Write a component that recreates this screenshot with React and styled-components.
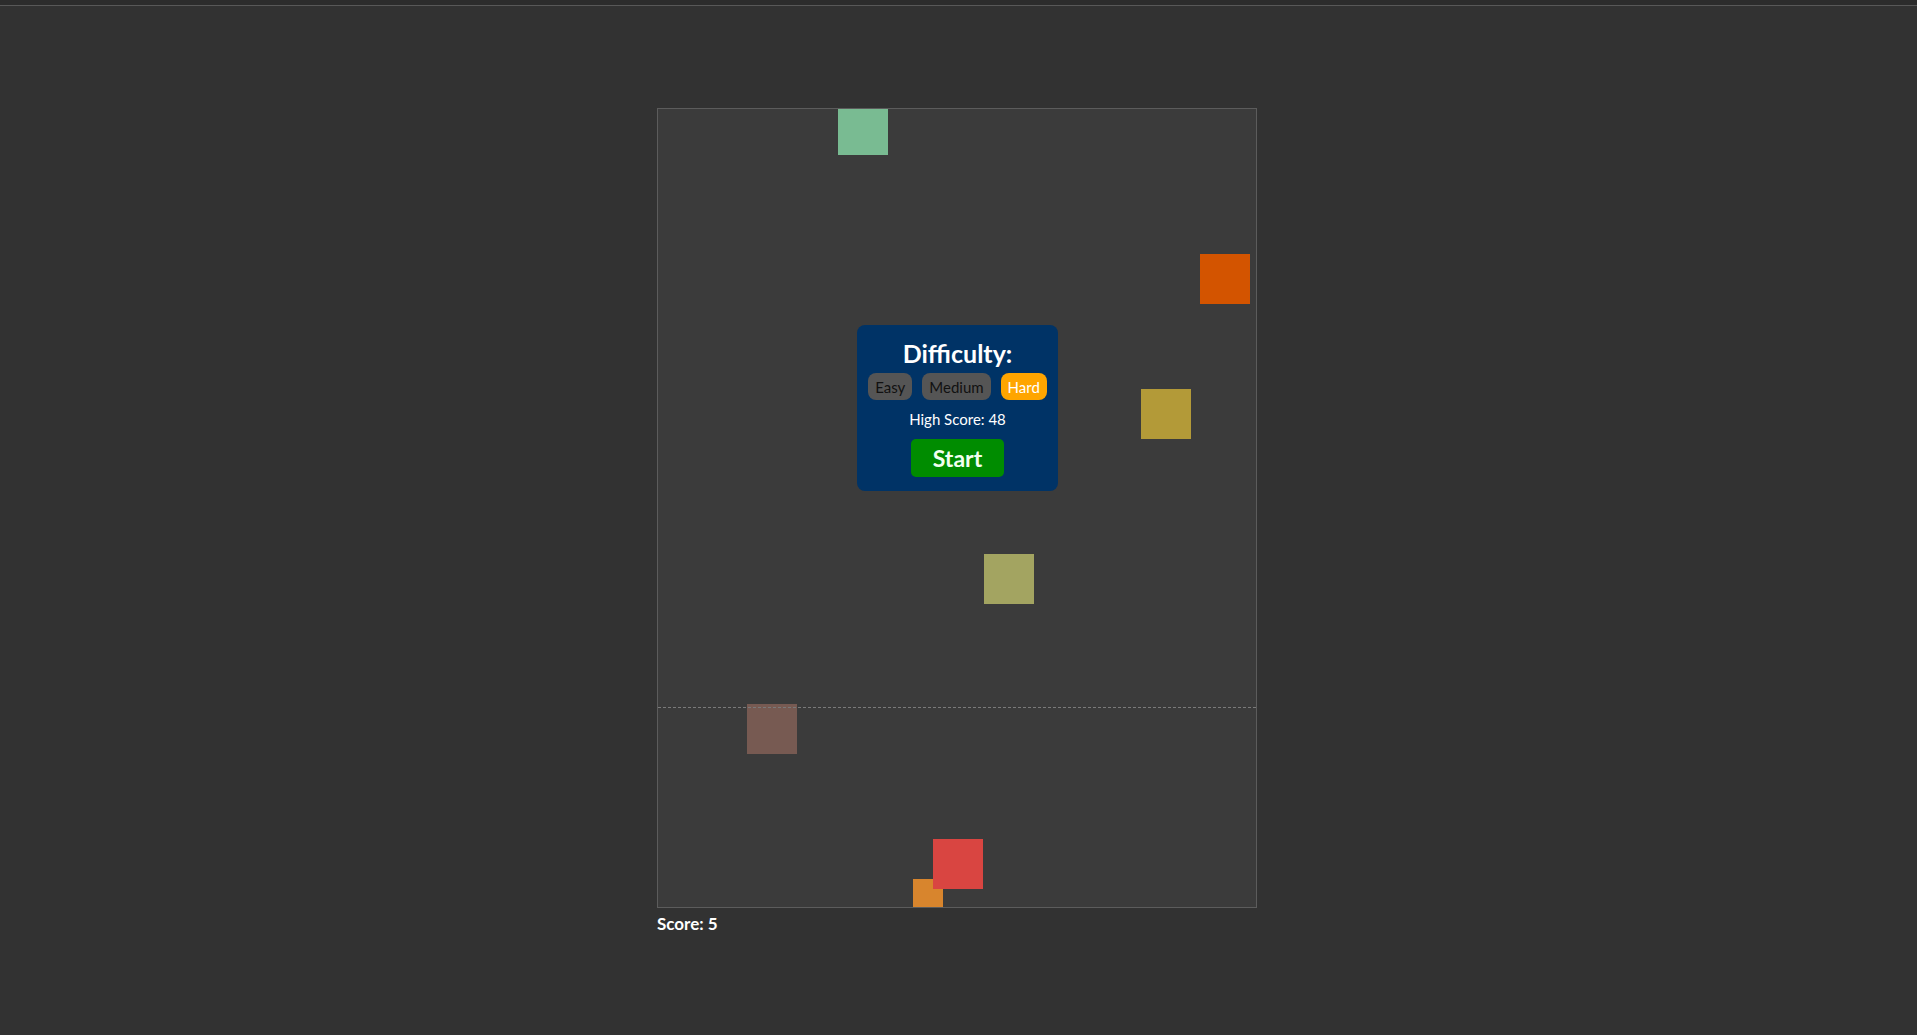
import React, { useState } from 'react';
import styled, { createGlobalStyle } from 'styled-components';

const GlobalStyle = createGlobalStyle`
  html, body {
    margin: 0;
    padding: 0;
    background: #323232;
    font-family: Lato, "Open Sans", sans-serif;
  }
`;

const TopBar = styled.div`
  height: 5px;
  background: #2c2c2c;
  border-bottom: 1px solid #585858;
`;

const Page = styled.div`
  display: flex;
  justify-content: center;
  padding-top: 102px;
  padding-right: 3px;
`;

const Column = styled.div`
  display: flex;
  flex-direction: column;
  width: 600px;
`;

const Board = styled.div`
  position: relative;
  box-sizing: border-box;
  width: 600px;
  height: 800px;
  background: #3b3b3b;
  border: 1px solid #5c5c5c;
  overflow: hidden;
`;

const DropLine = styled.div`
  position: absolute;
  left: 0;
  right: 0;
  top: 598px;
  border-top: 1px dashed #7a7a7a;
`;

const Block = styled.div`
  position: absolute;
  width: ${({ size }) => size}px;
  height: ${({ size }) => size}px;
  background: ${({ color }) => color};
`;

const Modal = styled.div`
  position: absolute;
  left: 199px;
  top: 216px;
  box-sizing: border-box;
  width: 201px;
  padding: 13px 10px 14px;
  background: #003366;
  border-radius: 8px;
  display: flex;
  flex-direction: column;
  align-items: center;
  color: #fff;
`;

const Title = styled.h2`
  margin: 0;
  font-size: 25px;
  line-height: 30px;
  font-weight: 700;
`;

const Options = styled.div`
  display: flex;
  gap: 10px;
  margin-top: 5px;
`;

const Option = styled.button`
  height: 27px;
  padding: 0 7px;
  border: none;
  border-radius: 8px;
  font-family: inherit;
  font-size: 15px;
  background: ${({ active }) => (active ? '#ffa500' : '#555555')};
  color: ${({ active }) => (active ? '#ffffff' : '#111111')};
  cursor: pointer;
`;

const HighScore = styled.div`
  margin-top: 10px;
  font-size: 15px;
  line-height: 18px;
`;

const StartButton = styled.button`
  margin-top: 11px;
  height: 38px;
  padding: 0 22px;
  border: none;
  border-radius: 5px;
  background: #008c00;
  color: #f2fff0;
  font-family: inherit;
  font-size: 23px;
  font-weight: 700;
  cursor: pointer;
`;

const ScoreLabel = styled.div`
  margin-top: 5px;
  color: #fff;
  font-size: 17px;
  line-height: 22px;
  font-weight: 700;
`;

const blocks = [
  { x: 180, y: -4, size: 50, color: '#79bb92' },
  { x: 542, y: 145, size: 50, color: '#d35400' },
  { x: 483, y: 280, size: 50, color: '#b39a38' },
  { x: 326, y: 445, size: 50, color: '#a3a461' },
  { x: 89, y: 595, size: 50, color: '#775a52' },
  { x: 255, y: 770, size: 30, color: '#d8852d' },
  { x: 275, y: 730, size: 50, color: '#d94541' },
];

const levels = ['Easy', 'Medium', 'Hard'];

export default function App() {
  const [level, setLevel] = useState('Hard');

  return (
    <>
      <GlobalStyle />
      <TopBar />
      <Page>
        <Column>
          <Board>
            {blocks.map((b, i) => (
              <Block key={i} size={b.size} color={b.color} style={{ left: b.x, top: b.y }} />
            ))}
            <DropLine />
            <Modal>
              <Title>Difficulty:</Title>
              <Options>
                {levels.map((l) => (
                  <Option key={l} active={level === l} onClick={() => setLevel(l)}>
                    {l}
                  </Option>
                ))}
              </Options>
              <HighScore>High Score: 48</HighScore>
              <StartButton>Start</StartButton>
            </Modal>
          </Board>
          <ScoreLabel>Score: 5</ScoreLabel>
        </Column>
      </Page>
    </>
  );
}
